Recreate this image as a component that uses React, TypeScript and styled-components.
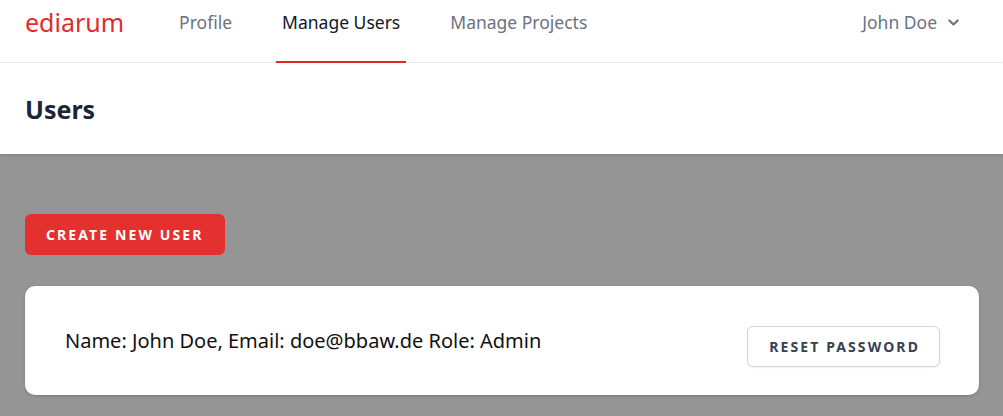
import styled, { createGlobalStyle } from "styled-components";

const GlobalStyle = createGlobalStyle`
  html, body {
    margin: 0;
    padding: 0;
    background: #959595;
    font-family: "Noto Sans", "Open Sans", sans-serif;
  }
  * {
    box-sizing: border-box;
  }
`;

const Page = styled.div`
  min-height: 416px;
  display: flex;
  flex-direction: column;
`;

const NavBar = styled.nav`
  height: 63px;
  background: #fff;
  border-bottom: 1px solid #eeeeee;
  display: flex;
  align-items: stretch;
  padding: 0 25px;
`;

const Logo = styled.div`
  color: #e32b2b;
  font-size: 25px;
  line-height: 30px;
  padding-top: 7px;
  margin-right: 49px;
`;

const NavLinks = styled.div`
  display: flex;
  align-items: stretch;
  gap: 38px;
  flex: 1;
`;

const NavLink = styled.a<{ $active?: boolean }>`
  display: block;
  padding: 10px 6px 0;
  font-size: 17.5px;
  line-height: 24px;
  color: ${({ $active }) => ($active ? "#111827" : "#6b7280")};
  border-bottom: 2px solid ${({ $active }) => ($active ? "#e32b2b" : "transparent")};
  text-decoration: none;
  margin-bottom: -1px;
  cursor: pointer;
`;

const UserMenu = styled.button`
  display: flex;
  align-items: center;
  align-self: flex-start;
  gap: 6px;
  margin-top: 10px;
  height: 24px;
  background: none;
  border: none;
  font-family: inherit;
  font-size: 17.5px;
  color: #6b7280;
  padding: 0 14px 0 0;
  cursor: pointer;
`;

const Header = styled.header`
  height: 91px;
  background: #fff;
  display: flex;
  align-items: center;
  padding: 0 25px;
  box-shadow: 0 1px 3px rgba(0, 0, 0, 0.15);
  position: relative;
`;

const Title = styled.h1`
  margin: 0;
  font-size: 25px;
  font-weight: 700;
  color: #1b2538;
`;

const Main = styled.main`
  padding: 60px 24px 20px 25px;
  display: flex;
  flex-direction: column;
  align-items: flex-start;
  gap: 31px;
`;

const PrimaryButton = styled.button`
  height: 41px;
  padding: 0 21px;
  background: #e53030;
  color: #fff;
  border: none;
  border-radius: 6px;
  font-family: inherit;
  font-size: 14px;
  font-weight: 700;
  letter-spacing: 2.1px;
  text-transform: uppercase;
  cursor: pointer;
`;

const Card = styled.div`
  align-self: stretch;
  background: #fff;
  border-radius: 10px;
  box-shadow: 0 1px 3px rgba(0, 0, 0, 0.2);
  padding: 40px 39px 28px 40px;
  display: flex;
  justify-content: space-between;
  align-items: flex-start;
`;

const UserInfo = styled.div`
  font-size: 20px;
  line-height: 28px;
  color: #111;
  padding-top: 1px;
`;

const SecondaryButton = styled.button`
  height: 41px;
  padding: 0 19px 0 21px;
  background: #fff;
  color: #374151;
  border: 1px solid #d1d5db;
  border-radius: 6px;
  box-shadow: 0 1px 2px rgba(0, 0, 0, 0.05);
  font-family: inherit;
  font-size: 14px;
  font-weight: 700;
  letter-spacing: 2.1px;
  text-transform: uppercase;
  cursor: pointer;
`;

const Chevron = () => (
  <svg width="21" height="21" viewBox="0 0 20 20" fill="currentColor">
    <path
      fillRule="evenodd"
      d="M5.293 7.293a1 1 0 011.414 0L10 10.586l3.293-3.293a1 1 0 111.414 1.414l-4 4a1 1 0 01-1.414 0l-4-4a1 1 0 010-1.414z"
      clipRule="evenodd"
    />
  </svg>
);

export default function App() {
  return (
    <Page>
      <GlobalStyle />
      <NavBar>
        <Logo>ediarum</Logo>
        <NavLinks>
          <NavLink>Profile</NavLink>
          <NavLink $active>Manage Users</NavLink>
          <NavLink>Manage Projects</NavLink>
        </NavLinks>
        <UserMenu>
          John Doe
          <Chevron />
        </UserMenu>
      </NavBar>
      <Header>
        <Title>Users</Title>
      </Header>
      <Main>
        <PrimaryButton>Create new user</PrimaryButton>
        <Card>
          <UserInfo>Name: John Doe, Email: doe@bbaw.de Role: Admin</UserInfo>
          <SecondaryButton>Reset password</SecondaryButton>
        </Card>
      </Main>
    </Page>
  );
}
